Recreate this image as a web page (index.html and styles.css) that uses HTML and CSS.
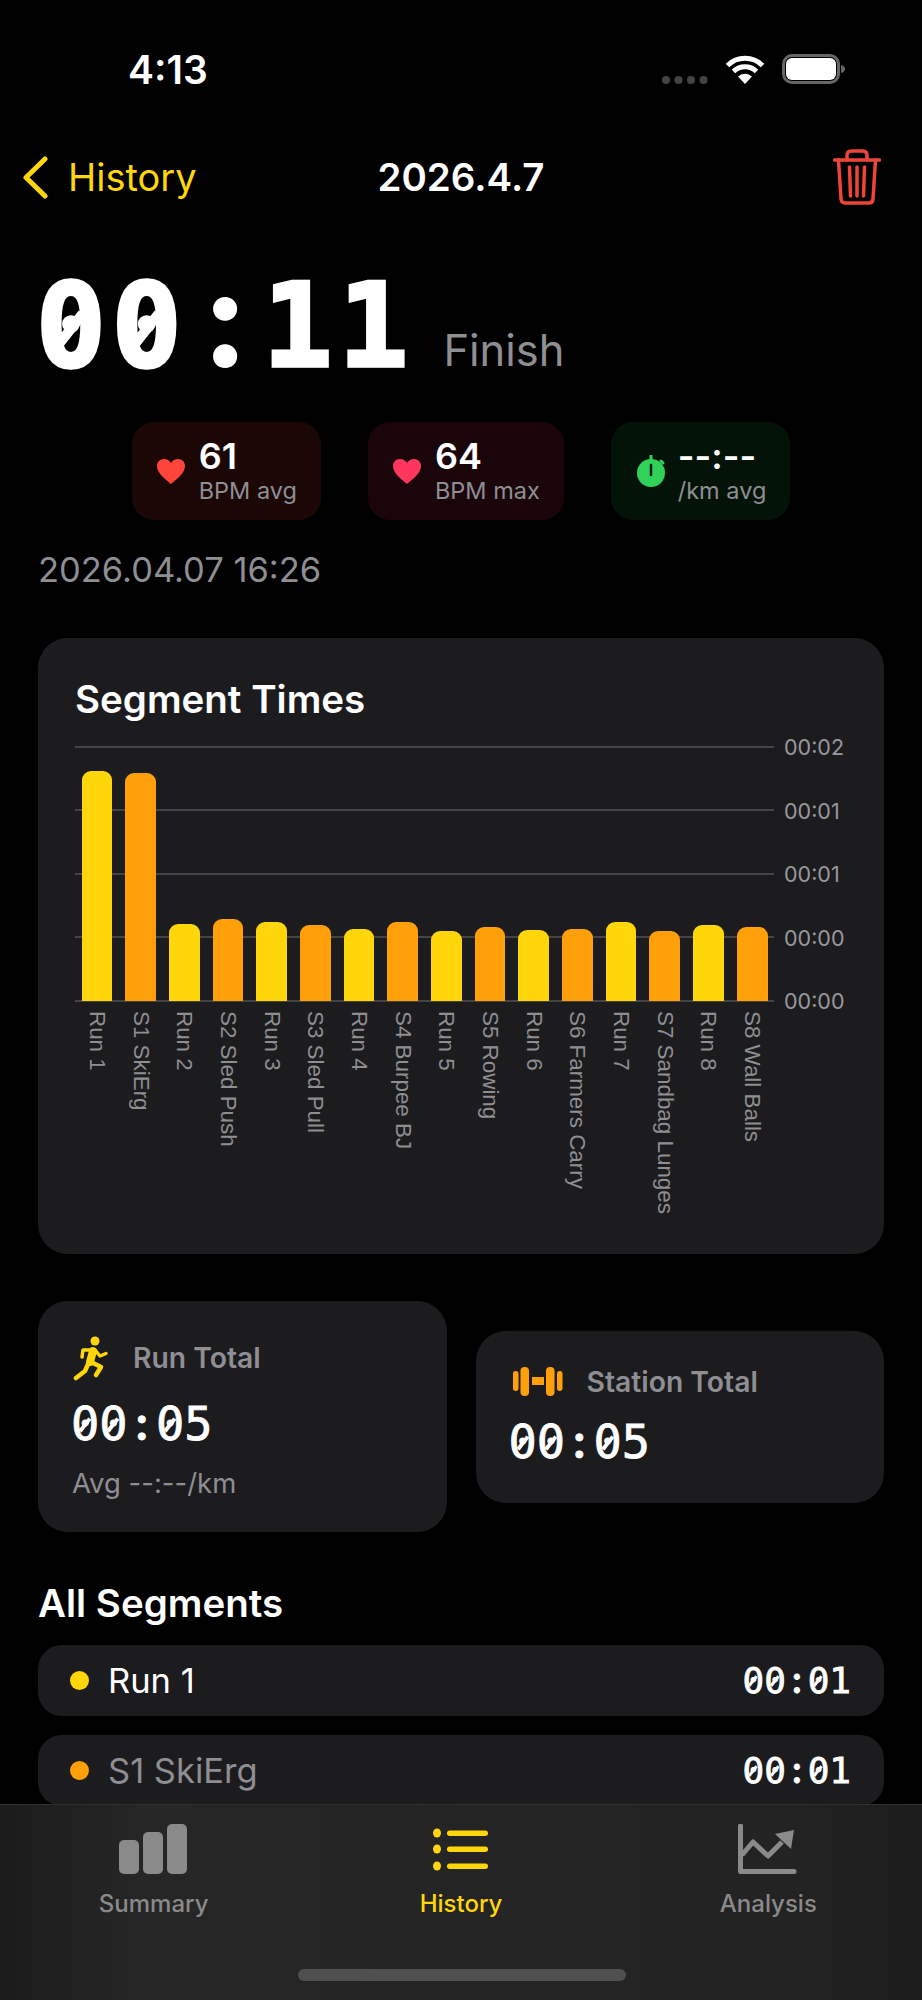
FILE: index.html
```html
<!DOCTYPE html>
<html lang="en">
  <head>
    <title>Workout Detail</title>
    <meta charset="UTF-8" />
    <meta name="viewport" content="width=device-width, initial-scale=1.0" />
    <link rel="stylesheet" href="styles.css">
  </head>
  <body>
    <div class="screen">
      <div class="status">
        <span class="clock">4:13</span>
        <div class="status-icons">
          <svg class="signal" width="46" height="8" viewBox="0 0 46 8"><circle cx="4" cy="4" r="4"/><circle cx="16.500" cy="4" r="4"/><circle cx="29" cy="4" r="4"/><circle cx="41.500" cy="4" r="4"/></svg>
          <svg class="wifi" width="40" height="29" viewBox="0 0 40 29">
            <path d="M2.500 10.500a25 25 0 0 1 35 0M8.500 16.500a16.500 16.500 0 0 1 23 0" fill="none" stroke="#fff" stroke-width="5"/>
            <path d="M13 21.500a10 10 0 0 1 14 0L20 29z" fill="#fff"/>
          </svg>
          <svg class="battery" width="64" height="30" viewBox="0 0 64 30">
            <rect x="1.500" y="1.500" width="55" height="27" rx="8.500" fill="none" stroke="#666" stroke-width="3"/>
            <rect x="4" y="4" width="50" height="22" rx="6" fill="#fff"/>
            <path d="M59 11c2.500 .5 4 2 4 4s-1.500 3.500-4 4z" fill="#666"/>
          </svg>
        </div>
      </div>

      <div class="nav">
        <div class="nav-back">
          <svg width="26" height="43" viewBox="0 0 26 43"><path d="M23 3L4 21.500L23 40" fill="none" stroke="#ffd60a" stroke-width="5" stroke-linecap="round" stroke-linejoin="round"/></svg>
          <span>History</span>
        </div>
        <div class="nav-title">2026.4.7</div>
        <svg class="trash" width="48" height="56" viewBox="0 0 48 56" fill="none" stroke="#f0443a" stroke-width="3.500" stroke-linecap="round" stroke-linejoin="round">
          <path d="M1.500 11H46.500"/>
          <path d="M14 11V6.500Q14 2 18.500 2H29.500Q34 2 34 6.500V11"/>
          <path d="M5.500 11L8 50Q8.300 54 12 54H36Q39.700 54 40 50L42.500 11"/>
          <path d="M16.500 18L17.500 47M24 18V47M31.500 18L30.500 47"/>
        </svg>
      </div>

      <div class="main">
        <div class="total">
          <span class="total-time"><span class="zero">0</span><span class="zero">0</span><span class="colon">:</span>11</span>
          <span class="total-label">Finish</span>
        </div>

        <div class="chips">
          <div class="chip chip-red">
            <svg width="28" height="25" viewBox="0 0 28 25"><path d="M14 25C8 20 0 14 0 7C0 3 3 0 7 0C10 0 12.500 1.500 14 4C15.500 1.500 18 0 21 0C25 0 28 3 28 7C28 14 20 20 14 25Z" fill="#ff453a"/></svg>
            <div><div class="chip-value">61</div><div class="chip-label">BPM avg</div></div>
          </div>
          <div class="chip chip-pink">
            <svg width="28" height="25" viewBox="0 0 28 25"><path d="M14 25C8 20 0 14 0 7C0 3 3 0 7 0C10 0 12.500 1.500 14 4C15.500 1.500 18 0 21 0C25 0 28 3 28 7C28 14 20 20 14 25Z" fill="#ff375f"/></svg>
            <div><div class="chip-value">64</div><div class="chip-label">BPM max</div></div>
          </div>
          <div class="chip chip-green">
            <svg width="30" height="32" viewBox="0 0 30 32">
              <circle cx="15" cy="18" r="14" fill="#30d158"/>
              <path d="M15 1V6M25 6L27 8" stroke="#30d158" stroke-width="3" stroke-linecap="round"/>
              <path d="M15 10V20" stroke="#08150b" stroke-width="2.500" stroke-linecap="round"/>
            </svg>
            <div><div class="chip-value">--:--</div><div class="chip-label">/km avg</div></div>
          </div>
        </div>

        <div class="date">2026.04.07 16:26</div>

        <div class="card chart-card">
          <h2 class="heading">Segment Times</h2>
          <div class="chart">
            <div class="plot">
              <div class="bar run" style="height: 230px"></div>
              <div class="bar station" style="height: 228px"></div>
              <div class="bar run" style="height: 77px"></div>
              <div class="bar station" style="height: 82px"></div>
              <div class="bar run" style="height: 79px"></div>
              <div class="bar station" style="height: 76px"></div>
              <div class="bar run" style="height: 72px"></div>
              <div class="bar station" style="height: 79px"></div>
              <div class="bar run" style="height: 70px"></div>
              <div class="bar station" style="height: 74px"></div>
              <div class="bar run" style="height: 71px"></div>
              <div class="bar station" style="height: 72px"></div>
              <div class="bar run" style="height: 79px"></div>
              <div class="bar station" style="height: 70px"></div>
              <div class="bar run" style="height: 76px"></div>
              <div class="bar station" style="height: 74px"></div>
            </div>
            <div class="axis">
              <span>00:02</span>
              <span>00:01</span>
              <span>00:01</span>
              <span>00:00</span>
              <span>00:00</span>
            </div>
          </div>
          <div class="bar-labels">
            <span>Run 1</span>
            <span>S1 SkiErg</span>
            <span>Run 2</span>
            <span>S2 Sled Push</span>
            <span>Run 3</span>
            <span>S3 Sled Pull</span>
            <span>Run 4</span>
            <span>S4 Burpee BJ</span>
            <span>Run 5</span>
            <span>S5 Rowing</span>
            <span>Run 6</span>
            <span>S6 Farmers Carry</span>
            <span>Run 7</span>
            <span>S7 Sandbag Lunges</span>
            <span>Run 8</span>
            <span>S8 Wall Balls</span>
          </div>
        </div>

        <div class="totals">
          <div class="card total-card">
            <div class="total-head">
              <svg width="40" height="46" viewBox="12 10 40 46" fill="none" stroke="#ffd60a" stroke-linecap="round" stroke-linejoin="round">
                <circle cx="35" cy="16" r="4.500" fill="#ffd60a" stroke="none"/>
                <path d="M22 32L23 25H35L40 31L46 28.500" stroke-width="3.500"/>
                <path d="M33 26L30 37" stroke-width="8"/>
                <path d="M31 37L41 42L36 50" stroke-width="4.500"/>
                <path d="M28.500 38L25 46L16 53" stroke-width="4.500"/>
              </svg>
              <span>Run Total</span>
            </div>
            <div class="total-value mono"><span class="zero">0</span><span class="zero">0</span><span class="colon">:</span><span class="zero">0</span>5</div>
            <div class="total-avg">Avg --:--/km</div>
          </div>
          <div class="card total-card">
            <div class="total-head">
              <svg width="56" height="30" viewBox="10 13 56 30" fill="#ff9f0a">
                <rect x="13" y="17" width="5.500" height="20" rx="2.700"/>
                <rect x="20.500" y="13" width="8.500" height="29" rx="4"/>
                <rect x="32" y="23" width="12" height="8"/>
                <rect x="46" y="13" width="8.500" height="29" rx="4"/>
                <rect x="57" y="17" width="5.500" height="20" rx="2.700"/>
              </svg>
              <span>Station Total</span>
            </div>
            <div class="total-value mono"><span class="zero">0</span><span class="zero">0</span><span class="colon">:</span><span class="zero">0</span>5</div>
          </div>
        </div>

        <h2 class="heading segments-title">All Segments</h2>
        <div class="segments">
          <div class="segment">
            <span class="dot run"></span>
            <span class="segment-name">Run 1</span>
            <span class="segment-time mono"><span class="zero">0</span><span class="zero">0</span><span class="colon">:</span><span class="zero">0</span>1</span>
          </div>
          <div class="segment">
            <span class="dot station"></span>
            <span class="segment-name muted">S1 SkiErg</span>
            <span class="segment-time mono"><span class="zero">0</span><span class="zero">0</span><span class="colon">:</span><span class="zero">0</span>1</span>
          </div>
        </div>
      </div>

      <div class="tabbar">
        <div class="tab">
          <div class="tab-icon tab-bars"><i></i><i></i><i></i></div>
          <span>Summary</span>
        </div>
        <div class="tab active">
          <svg class="tab-icon" width="56" height="50" viewBox="0 0 56 50" fill="#ffd60a">
            <ellipse cx="4" cy="9" rx="4" ry="4.500"/><rect x="14" y="6.500" width="41" height="5.500" rx="2.700"/>
            <ellipse cx="4" cy="25" rx="4" ry="4.500"/><rect x="14" y="22.500" width="41" height="5.500" rx="2.700"/>
            <ellipse cx="4" cy="42" rx="4" ry="4.500"/><rect x="14" y="39.500" width="41" height="5.500" rx="2.700"/>
          </svg>
          <span>History</span>
        </div>
        <div class="tab">
          <svg class="tab-icon" width="60" height="50" viewBox="19 14 60 50">
            <path d="M21.500 16V61.500H75" fill="none" stroke="#8a8a8a" stroke-width="5" stroke-linecap="round" stroke-linejoin="round"/>
            <path d="M23 45L34 32L49 46L63 32" fill="none" stroke="#8a8a8a" stroke-width="5" stroke-linejoin="round"/>
            <path d="M56 24L75 20L72 39z" fill="#8a8a8a"/>
          </svg>
          <span>Analysis</span>
        </div>
        <div class="home-bar"></div>
      </div>
    </div>
  </body>
</html>
```

FILE: styles.css
```css
* {
  box-sizing: border-box;
  margin: 0;
  padding: 0;
}
body {
  background: #000;
  font-family: "Inter", "Liberation Sans", sans-serif;
  color: #fff;
}
.screen {
  position: relative;
  width: 922px;
  height: 2000px;
  overflow: hidden;
  background: #000;
}

/* status bar */
.status {
  display: flex;
  justify-content: space-between;
  align-items: center;
  height: 138px;
  padding: 0 76px 0 128px;
}
.clock {
  font-size: 39px;
  font-weight: 600;
}
.status-icons {
  display: flex;
  align-items: flex-end;
  gap: 17px;
}
.signal {
  fill: #444;
}

/* nav */
.nav {
  display: grid;
  grid-template-columns: 1fr auto 1fr;
  align-items: center;
  height: 78px;
  padding: 0 41px;
}
.nav-back {
  display: flex;
  align-items: center;
  gap: 20px;
  margin-left: -19px;
  color: #ffd60a;
  font-size: 38px;
}
.nav-title {
  font-size: 38.500px;
  font-weight: 600;
}
.trash {
  justify-self: end;
}

/* main */
.main {
  padding: 0 38px;
}
.total {
  display: flex;
  align-items: baseline;
  gap: 29px;
  margin-top: 42px;
}
.total-time {
  margin-left: -2px;
  font-family: "DejaVu Sans Mono", monospace;
  font-weight: 700;
  font-size: 116px;
  line-height: 136px;
  letter-spacing: 6px;
  -webkit-text-stroke: 3.500px #fff;
}
.total-label {
  font-size: 43.500px;
  color: #8e8e93;
}

/* the mono font has a dotted zero and square colon, the app slashed and round */
.zero {
  position: relative;
  display: inline-block;
}
.zero::after {
  content: "";
  position: absolute;
  left: 50%;
  top: 52%;
  width: 0.34em;
  height: 0.09em;
  background: #fff;
  transform: translate(-50%, -50%) rotate(-52deg);
}
.total-time .zero::after {
  margin-left: -3px;
}
.colon {
  display: inline-block;
  width: 0.602em;
  text-align: center;
  font-family: "Lato", sans-serif;
  font-weight: 700;
  line-height: 0;
}
.total-time .colon {
  width: 75px;
  font-size: 135px;
  font-weight: 900;
  letter-spacing: 0;
  -webkit-text-stroke: 2px #fff;
}
.chips {
  display: flex;
  justify-content: center;
  gap: 47px;
  margin-top: 28px;
}
.chip {
  display: flex;
  align-items: center;
  gap: 14px;
  height: 98px;
  padding: 0 24px 0 25px;
  border-radius: 22px;
}
.chip-red {
  background: rgba(255, 69, 58, 0.1);
}
.chip-pink {
  background: rgba(255, 55, 95, 0.1);
}
.chip-green {
  background: rgba(48, 209, 88, 0.09);
  gap: 12px;
}
.chip-value {
  font-size: 36px;
  font-weight: 600;
  line-height: 40px;
}
.chip-label {
  font-size: 23.500px;
  line-height: 30px;
  color: #8e8e93;
}
.date {
  margin-top: 28px;
  font-size: 34.500px;
  line-height: 44px;
  color: #8e8e93;
}

/* cards */
.card {
  background: #1c1c1e;
  border-radius: 30px;
}
.heading {
  font-size: 38.500px;
  font-weight: 600;
  line-height: 46px;
}
.chart-card {
  height: 616px;
  margin-top: 46px;
  padding: 38px 0 0 37px;
}
.chart {
  display: flex;
  margin-top: 24px;
}
.plot {
  display: flex;
  align-items: flex-end;
  width: 699px;
  height: 256px;
  padding-bottom: 1px;
  background: linear-gradient(to bottom,
    #444 0 2px, transparent 2px 63px,
    #444 63px 65px, transparent 65px 127px,
    #444 127px 129px, transparent 129px 190px,
    #444 190px 192px, transparent 192px 254px,
    #444 254px 256px);
}
.bar {
  flex: 1;
  margin: 0 6.500px;
  border-radius: 9px 9px 0 0;
}
.run {
  background: #ffd60a;
}
.station {
  background: #ff9f0a;
}
.axis {
  display: flex;
  flex-direction: column;
  justify-content: space-between;
  height: 278px;
  margin: -11px 0 0 10px;
  font-size: 21.500px;
  line-height: 24px;
  color: #98989d;
}
.bar-labels {
  display: flex;
  width: 699px;
  margin-top: -2px;
}
.bar-labels span {
  flex: 1;
  min-width: 0;
  display: flex;
  align-items: center;
  writing-mode: vertical-rl;
  font-family: "Liberation Sans", sans-serif;
  font-size: 22.400px;
  line-height: 40px;
  white-space: nowrap;
  color: #8e8e93;
}

/* run / station totals */
.totals {
  display: flex;
  align-items: center;
  gap: 29px;
  margin-top: 47px;
}
.total-card {
  flex: 1;
  padding: 34px 34px 32px;
}
.total-head {
  display: flex;
  align-items: center;
  gap: 21px;
  font-size: 28.300px;
  font-weight: 600;
  color: #8e8e93;
}
.mono {
  font-family: "DejaVu Sans Mono", monospace;
  -webkit-text-stroke: 0.8px #fff;
}
.total-value {
  margin: 14px 0 0 -1px;
  font-size: 47px;
  line-height: 58px;
}
.total-avg {
  margin-top: 13px;
  font-size: 27.500px;
  line-height: 34px;
  color: #8e8e93;
}

/* segments */
.segments-title {
  margin-top: 48px;
}
.segments {
  display: flex;
  flex-direction: column;
  gap: 19px;
  margin-top: 19px;
}
.segment {
  display: flex;
  align-items: center;
  height: 71px;
  padding: 0 33px 0 32px;
  background: #1c1c1e;
  border-radius: 24px;
}
.dot {
  width: 19px;
  height: 19px;
  border-radius: 50%;
}
.segment-name {
  flex: 1;
  margin-left: 19px;
  font-size: 34.500px;
}
.segment-name.muted {
  color: #8e8e93;
}
.segment-time {
  font-size: 36px;
}

/* tab bar */
.tabbar {
  position: absolute;
  left: 0;
  right: 0;
  bottom: 0;
  display: grid;
  grid-template-columns: repeat(3, 1fr);
  height: 196px;
  padding-top: 19px;
  border-top: 1px solid #303030;
  background: linear-gradient(90deg, #1b1b1b, #262626 15%, #232323 85%, #1c1c1c);
}
.tab {
  display: flex;
  flex-direction: column;
  align-items: center;
  gap: 15px;
  font-size: 24px;
  font-weight: 500;
  color: #8a8a8a;
}
.tab.active {
  color: #ffd60a;
}
.tab-icon {
  display: block;
  height: 50px;
}
.tab-bars {
  display: flex;
  align-items: flex-end;
  gap: 4px;
  margin-right: 2px;
}
.tab-bars i {
  width: 20px;
  height: 34px;
  border-radius: 5px;
  background: #8a8a8a;
}
.tab-bars i:nth-child(2) {
  height: 42px;
}
.tab-bars i:nth-child(3) {
  height: 50px;
}
.home-bar {
  position: absolute;
  left: 298px;
  bottom: 19px;
  width: 328px;
  height: 12px;
  border-radius: 6px;
  background: #4f4f4f;
}
```
